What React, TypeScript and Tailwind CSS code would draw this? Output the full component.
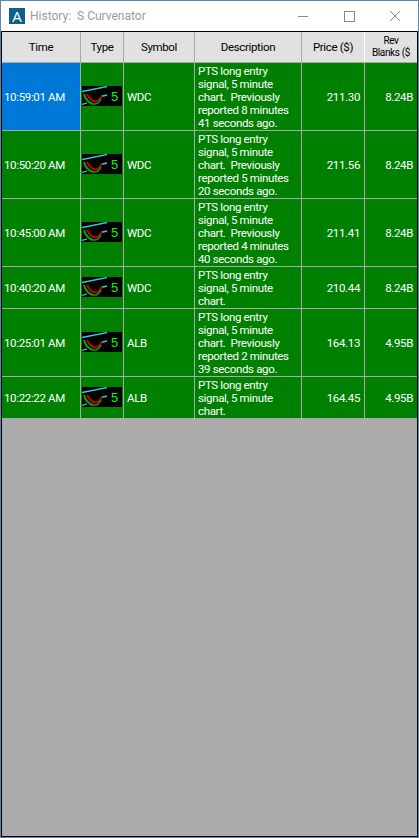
import React from 'react'

const columns = 'grid grid-cols-[79px_43px_71px_107px_63px_52px]'

const rows = [
  { time: '10:59:01 AM', symbol: 'WDC', lines: ['PTS long entry', 'signal, 5 minute', 'chart.  Previously', 'reported 8 minutes', '41 seconds ago.'], price: '211.30', rev: '8.24B', selected: true },
  { time: '10:50:20 AM', symbol: 'WDC', lines: ['PTS long entry', 'signal, 5 minute', 'chart.  Previously', 'reported 5 minutes', '20 seconds ago.'], price: '211.56', rev: '8.24B' },
  { time: '10:45:00 AM', symbol: 'WDC', lines: ['PTS long entry', 'signal, 5 minute', 'chart.  Previously', 'reported 4 minutes', '40 seconds ago.'], price: '211.41', rev: '8.24B' },
  { time: '10:40:20 AM', symbol: 'WDC', lines: ['PTS long entry', 'signal, 5 minute', 'chart.'], price: '210.44', rev: '8.24B' },
  { time: '10:25:01 AM', symbol: 'ALB', lines: ['PTS long entry', 'signal, 5 minute', 'chart.  Previously', 'reported 2 minutes', '39 seconds ago.'], price: '164.13', rev: '4.95B' },
  { time: '10:22:22 AM', symbol: 'ALB', lines: ['PTS long entry', 'signal, 5 minute', 'chart.'], price: '164.45', rev: '4.95B' },
]

function TypeIcon() {
  return (
    <svg width="40" height="20" viewBox="0 0 40 20" className="block ml-[1px] mb-[2px]">
      <rect width="40" height="20" fill="#000" />
      <path d="M0 5.5 L25 0.5" stroke="#22d3e6" strokeWidth="1.3" fill="none" />
      <path d="M19 10.5 L25 9" stroke="#22d3e6" strokeWidth="1.3" fill="none" />
      <path d="M0 18.5 L5 17" stroke="#22d3e6" strokeWidth="1.3" fill="none" />
      <path d="M2 8 C3 13 7 17 11 18" stroke="#00a800" strokeWidth="2" fill="none" />
      <path d="M5 8 C7 12 10 15 13 15.5 C16 16 18 13 20 10" stroke="#c80000" strokeWidth="2" fill="none" />
      <path d="M11 18 C14 18.5 17 17 19 13" stroke="#00a800" strokeWidth="1.5" fill="none" />
      <text x="29" y="15" fontSize="13" fill="#00ff00" fontFamily="'Liberation Sans', sans-serif">5</text>
    </svg>
  )
}

export default function App() {
  return (
    <div className="w-[419px] h-[838px] flex flex-col border border-[#5f86a8] bg-white font-['Roboto','Liberation_Sans',sans-serif] text-[11.5px] leading-[13px] tracking-[-0.35px] overflow-hidden">
      <div className="h-[30px] flex items-center shrink-0">
        <div className="ml-[8px] w-[16px] h-[16px] bg-[#0f5f8c] text-white text-[15px] leading-[16px] text-center tracking-normal font-['Open_Sans',sans-serif]">A</div>
        <span className="ml-[5px] text-[12px] tracking-normal text-[#9a9aa2] font-['Roboto',sans-serif] whitespace-pre">History:  S Curvenator</span>
        <div className="ml-auto flex items-center">
          <svg width="46" height="30" viewBox="0 0 46 30"><path d="M18 15.5 H28" stroke="#888" /></svg>
          <svg width="46" height="30" viewBox="0 0 46 30"><rect x="18.5" y="10.5" width="10" height="10" fill="none" stroke="#888" /></svg>
          <svg width="46" height="30" viewBox="0 0 46 30"><path d="M18 10 L28 20 M28 10 L18 20" stroke="#888" /></svg>
        </div>
      </div>

      <div className="flex-1 bg-[#ababab] border border-black">
        <div className={`${columns} h-[31px] bg-[#e1e1e1] text-black text-center border-b border-[#a9a9a9]`}>
          <div className="flex items-center justify-center border-r border-[#a9a9a9]">Time</div>
          <div className="flex items-center justify-center border-r border-[#a9a9a9]">Type</div>
          <div className="flex items-center justify-center border-r border-[#a9a9a9]">Symbol</div>
          <div className="flex items-center justify-center border-r border-[#a9a9a9]">Description</div>
          <div className="flex items-center justify-center border-r border-white">Price ($)</div>
          <div className="flex flex-col items-center justify-center text-[10px] leading-[12px] whitespace-nowrap overflow-hidden">
            <span>Rev</span>
            <span>Blanks ($</span>
          </div>
        </div>

        {rows.map((row) => (
          <div key={row.time} className={`${columns} bg-[#008000] text-white border-b border-[#a9a9a9] ${row.lines.length === 5 ? 'h-[68px]' : 'h-[42px]'}`}>
            <div className={`flex items-center pl-[2px] pt-[1px] border-r border-[#a9a9a9] whitespace-nowrap ${row.selected ? 'bg-[#0078d7]' : ''}`}>{row.time}</div>
            <div className="flex items-center border-r border-[#a9a9a9]"><TypeIcon /></div>
            <div className="flex items-center pl-[3px] pt-[1px] border-r border-[#a9a9a9]">{row.symbol}</div>
            <div className="flex flex-col justify-center pl-[3px] pt-[1px] border-r border-[#a9a9a9] whitespace-pre">
              {row.lines.map((line) => <span key={line}>{line}</span>)}
            </div>
            <div className="flex items-center justify-end pr-[4px] pt-[1px] border-r border-[#a9a9a9]">{row.price}</div>
            <div className="flex items-center justify-end pr-[4px] pt-[1px]">{row.rev}</div>
          </div>
        ))}
      </div>
    </div>
  )
}
